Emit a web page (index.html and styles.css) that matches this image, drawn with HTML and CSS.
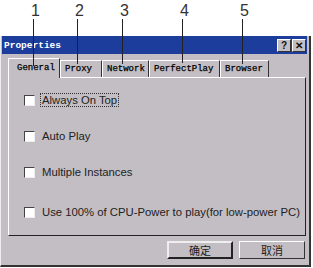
FILE: index.html
```html
<!DOCTYPE html>
<html lang="en">
<head>
  <meta charset="UTF-8">
  <title>Properties</title>
  <link rel="stylesheet" href="styles.css">
</head>
<body>
  <div class="callout" style="left: 28px;"><span>1</span><i style="height: 47px;"></i></div>
  <div class="callout" style="left: 72px;"><span>2</span><i style="height: 45px;"></i></div>
  <div class="callout" style="left: 117px;"><span>3</span><i style="height: 45px;"></i></div>
  <div class="callout" style="left: 177px;"><span>4</span><i style="height: 44px;"></i></div>
  <div class="callout" style="left: 237px;"><span>5</span><i style="height: 45px;"></i></div>

  <div class="window">
    <div class="titlebar">
      <span class="title">Properties</span>
      <div class="title-btns">
        <div class="tbtn">?</div>
        <div class="tbtn">✕</div>
      </div>
    </div>

    <div class="tabs">
      <div class="tab active">General</div>
      <div class="tab w-proxy">Proxy</div>
      <div class="tab w-network">Network</div>
      <div class="tab w-perfect">PerfectPlay</div>
      <div class="tab w-browser">Browser</div>
    </div>

    <div class="panel">
      <label class="row"><span class="box"></span><span class="label focus">Always On Top</span></label>
      <label class="row"><span class="box"></span><span class="label">Auto Play</span></label>
      <label class="row"><span class="box"></span><span class="label">Multiple Instances</span></label>
      <label class="row last"><span class="box"></span><span class="label">Use 100% of CPU-Power to play(for low-power PC)</span></label>
    </div>

    <div class="buttons">
      <div class="btn default">确定</div>
      <div class="btn">取消</div>
    </div>
  </div>
</body>
</html>
```

FILE: styles.css
```css
html, body {
  margin: 0;
  padding: 0;
  width: 313px;
  height: 268px;
  overflow: hidden;
  background: #fff;
  font-family: 'Liberation Sans', Arial, sans-serif;
  position: relative;
}

/* number labels pointing at the tabs */
.callout {
  position: absolute;
  top: 3px;
  width: 12px;
  display: flex;
  flex-direction: column;
  align-items: flex-start;
  z-index: 5;
}

.callout span {
  font-size: 16px;
  line-height: 15px;
  color: #333;
  margin-left: 3px;
}

.callout i {
  display: block;
  width: 1px;
  background: #222;
  margin-left: 5px;
  margin-top: 1px;
}

.window {
  margin-top: 36px;
  width: 311px;
  height: 231px;
  box-sizing: border-box;
  background: #c2bec3;
  border-left: 1px solid #eee;
  border-right: 2px solid #333;
  border-bottom: 2px solid #333;
  padding: 0 2px 0 1px;
  display: flex;
  flex-direction: column;
}

.titlebar {
  height: 18px;
  background: #1d3d9d;
  display: flex;
  align-items: center;
  justify-content: space-between;
  padding: 0 1px 0 2px;
}

.title {
  font-family: 'Liberation Mono', monospace;
  font-weight: bold;
  font-size: 9.5px;
  color: #fff;
}

.title-btns {
  display: flex;
  gap: 1px;
}

.tbtn {
  width: 12px;
  height: 11px;
  background: #c2bec3;
  border: 1px solid;
  border-color: #fff #333 #333 #fff;
  font-size: 10px;
  line-height: 11px;
  font-weight: bold;
  text-align: center;
  color: #111;
}

.tabs {
  display: flex;
  align-items: flex-end;
  margin: 3px 0 0 6px;
  height: 20px;
}

.tab {
  height: 17px;
  box-sizing: border-box;
  padding: 0 4px;
  border: 1px solid;
  border-color: #fff #333 transparent #fff;
  border-bottom: none;
  font-family: 'Liberation Mono', monospace;
  font-size: 9px;
  line-height: 16px;
  color: #000;
  -webkit-text-stroke: 0.25px #000;
  white-space: nowrap;
}

.tab.active {
  width: 52px;
  height: 20px;
  padding: 0 0 0 8px;
  line-height: 18px;
  position: relative;
  z-index: 2;
  margin-bottom: -1px;
  background: #c2bec3;
}

.w-proxy { width: 42px; }
.w-network { width: 47px; }
.w-perfect { width: 71px; }
.w-browser { width: 49px; }

.panel {
  margin-left: 6px;
  width: 298px;
  height: 159px;
  box-sizing: border-box;
  border: 1px solid;
  border-color: #fff #222 #222 #fff;
  padding: 16px 0 0 15px;
  display: flex;
  flex-direction: column;
  gap: 24px;
}

.row {
  display: flex;
  align-items: center;
  height: 12px;
  font-size: 11.3px;
  color: #222;
  white-space: nowrap;
}

.row.last {
  margin-top: 4px;
}

.box {
  width: 9px;
  height: 9px;
  background: #fff;
  border: 1px solid;
  border-color: #444 #eee #eee #444;
  margin-right: 5px;
}

.label {
  padding: 0 1px;
  border: 1px dotted transparent;
}

.label.focus {
  border-color: #333;
}

.buttons {
  display: flex;
  justify-content: flex-end;
  gap: 6px;
  margin-top: 5px;
  padding-right: 2px;
}

.btn {
  width: 66px;
  height: 18px;
  box-sizing: border-box;
  border: 1px solid;
  border-color: #fff #333 #333 #fff;
  text-align: center;
  font-family: 'Noto Sans CJK SC', sans-serif;
  font-size: 11px;
  line-height: 16px;
  color: #222;
}

.btn.default {
  border: 2px solid #222;
  border-top-color: #eee;
  border-left-color: #eee;
  line-height: 14px;
}
```
